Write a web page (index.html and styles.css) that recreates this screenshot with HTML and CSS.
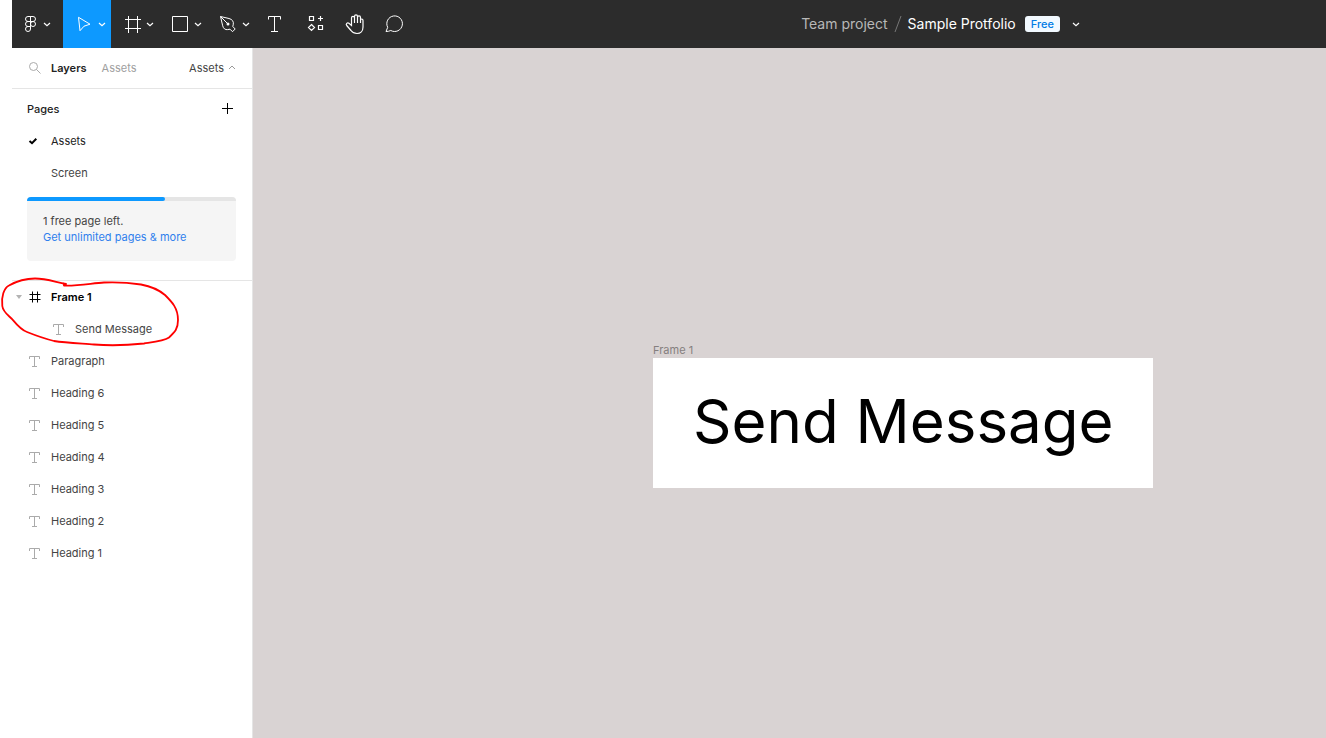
FILE: index.html
```html
<!DOCTYPE html>
<html lang="en">
<head>
<meta charset="utf-8">
<title>Sample Protfolio</title>
<link rel="stylesheet" href="styles.css">
</head>
<body>
<svg class="defs" aria-hidden="true">
  <symbol id="text-icon" viewBox="0 0 16 16"><path d="M2.500 6v-2.500h10v2.500M7.500 3.500v10M5 13.500h5"/></symbol>
  <symbol id="frame-icon" viewBox="0 0 16 16"><path d="M5.500 2.500v11M10.500 2.500v11M2.500 5.500h11M2.500 10.500h11"/></symbol>
</svg>
<div class="app">
  <header class="toolbar">
    <nav class="tools" aria-label="Tools">
      <button class="tool tool-menu" aria-label="Main menu">
        <svg width="51" height="48" viewBox="0 0 51 48"><path d="M18.500 16.500h-2.500a2.500 2.500 0 0 0 0 5h2.500zM18.500 16.500h2.500a2.500 2.500 0 0 1 0 5h-2.500zM18.500 21.500h-2.500a2.500 2.500 0 0 0 0 5h2.500zM18.500 26.500h-2.500a2.500 2.500 0 1 0 2.500 2.500z"/><circle cx="21" cy="24" r="2.500"/><path class="chev" d="M32 23l3 2.700 3-2.700"/></svg>
      </button>
      <button class="tool tool-active" aria-label="Move">
        <svg width="48" height="48" viewBox="0 0 48 48"><path d="M15.500 17.300l11.500 6.900-6 2-4 4.500z"/><path class="chev" d="M36 23l3 2.700 3-2.700"/></svg>
      </button>
      <button class="tool" aria-label="Frame">
        <svg width="48" height="48" viewBox="0 0 48 48"><path d="M17.500 16v17M26.500 16v17M14 19.500h16M14 28.500h16"/><path class="chev" d="M36 23l3 2.700 3-2.700"/></svg>
      </button>
      <button class="tool" aria-label="Rectangle">
        <svg width="48" height="48" viewBox="0 0 48 48"><path d="M13.500 16.500h15v15h-15z"/><path class="chev" d="M36 23l3 2.700 3-2.700"/></svg>
      </button>
      <button class="tool" aria-label="Pen">
        <svg width="48" height="48" viewBox="0 0 48 48"><path d="M13.500 16.500l8.500 2c3.200.8 4.800 3 4.300 5.700l-.5 2.300 2.400 2.500-2.700 2.700-2.500-2.500-2.300.4c-2.500.4-4.300-1-5-3.800zM13.500 16.500l6.500 6.500"/><circle class="dot" cx="21" cy="24" r="1.500"/><path class="chev" d="M36 23l3 2.700 3-2.700"/></svg>
      </button>
      <button class="tool tool-small" aria-label="Text">
        <svg width="40" height="48" viewBox="0 0 40 48"><path d="M13.500 19.500v-3h12v3M19.500 16.500v15M16 31.500h7"/></svg>
      </button>
      <button class="tool tool-small" aria-label="Resources">
        <svg width="40" height="48" viewBox="0 0 40 48"><path class="bold" d="M14.500 16.500h4v4h-4zM23.500 25.500h4v4h-4zM25.500 16v5M23 18.500h5M16.500 24.500l3 3-3 3-3-3z"/></svg>
      </button>
      <button class="tool tool-small" aria-label="Hand">
        <svg width="40" height="48" viewBox="0 0 40 48"><path class="bold" d="M16.500 23v-5c0-2.300 3-2.300 3 0v-1.500c0-2.300 3-2.300 3 0v1c0-2.200 3-2.200 3 0v3c0-2 2.500-2 2.500 0v6.500c0 4-2.500 6.500-6 6.500-2.800 0-4.500-1-6-3l-4.300-5c-1.300-1.700.7-3.300 2.200-2.200l2.600 2.200zM19.500 18v5M22.500 17v6M25.500 18v5"/></svg>
      </button>
      <button class="tool tool-small" aria-label="Comment">
        <svg width="40" height="48" viewBox="0 0 40 48"><path d="M11 31.500l1.700-4.200a7.800 7.800 0 1 1 3.100 3.200c-1.500.7-3 1-4.800 1z"/></svg>
      </button>
    </nav>
    <div class="document">
      <a class="project" href="#">Team project</a>
      <svg class="slash" width="8" height="16" viewBox="0 0 8 16"><path d="M7 0L1 16"/></svg>
      <span class="file-name">Sample Protfolio</span>
      <span class="badge">Free</span>
      <button class="file-menu" aria-label="File menu"><svg width="8" height="8" viewBox="0 0 8 8"><path class="chev" d="M1 3l3 2.700 3-2.700"/></svg></button>
    </div>
  </header>

  <div class="workspace">
    <aside class="sidebar">
      <div class="tabs">
        <button class="search" aria-label="Search"><svg width="16" height="16" viewBox="0 0 16 16"><circle cx="6.500" cy="6.500" r="4"/><path d="M9.500 9.500l4 4"/></svg></button>
        <button class="tab tab-current">Layers</button>
        <button class="tab">Assets</button>
        <button class="page-toggle">Assets <svg width="8" height="8" viewBox="0 0 8 8"><path d="M1 5l3-3 3 3"/></svg></button>
      </div>

      <section class="pages">
        <div class="pages-head">
          <h2>Pages</h2>
          <button class="add" aria-label="Add page"><svg width="16" height="16" viewBox="0 0 16 16"><path d="M7.500 2v11M2 7.500h11"/></svg></button>
        </div>
        <button class="row row-selected"><span class="caret"></span><svg class="icon check" viewBox="0 0 16 16"><path d="M2.500 8l2.500 2.200 4.300-4.400"/></svg>Assets</button>
        <button class="row"><span class="caret"></span><span class="icon"></span>Screen</button>
        <div class="quota">
          <div class="track"><div class="used"></div></div>
          <p>1 free page left.</p>
          <a href="#">Get unlimited pages &amp; more</a>
        </div>
      </section>

      <section class="layers" aria-label="Layers">
        <button class="row row-frame"><span class="caret"><svg width="6" height="4" viewBox="0 0 6 4"><path d="M0 0h6l-3 4z"/></svg></span><svg class="icon"><use href="#frame-icon"/></svg>Frame 1</button>
        <button class="row row-child"><span class="caret"></span><svg class="icon"><use href="#text-icon"/></svg>Send Message</button>
        <button class="row"><span class="caret"></span><svg class="icon"><use href="#text-icon"/></svg>Paragraph</button>
        <button class="row"><span class="caret"></span><svg class="icon"><use href="#text-icon"/></svg>Heading 6</button>
        <button class="row"><span class="caret"></span><svg class="icon"><use href="#text-icon"/></svg>Heading 5</button>
        <button class="row"><span class="caret"></span><svg class="icon"><use href="#text-icon"/></svg>Heading 4</button>
        <button class="row"><span class="caret"></span><svg class="icon"><use href="#text-icon"/></svg>Heading 3</button>
        <button class="row"><span class="caret"></span><svg class="icon"><use href="#text-icon"/></svg>Heading 2</button>
        <button class="row"><span class="caret"></span><svg class="icon"><use href="#text-icon"/></svg>Heading 1</button>
      </section>
    </aside>

    <main class="canvas">
      <div class="artboard">
        <div class="artboard-label">Frame 1</div>
        <div class="artboard-body">Send Message</div>
      </div>
    </main>
  </div>
</div>

<svg class="annotation" width="184" height="72" viewBox="0 276 184 72" aria-hidden="true"><path d="M66 284C52 281 45 278.500 35 278.500C25 278.500 17 281 9 285.500C4 288 1 297 2.300 306C3 312 8 315 12 319C17 325 21 330 27 332C37 336 46 339 54 341C66 343 82 343.500 94 344.500C112 346 130 345 144 343.500C154 342 164 341 169 337.500C175 332 178 329 178 320C178 308 172 302 165 295C158 289 149 286 141 284.500C128 282.500 116 282 104 282.500C93 283 79 286 64 285.500L63.500 283.500"/></svg>
</body>
</html>
```

FILE: styles.css
```css
* {
  box-sizing: border-box;
}

body {
  margin: 0;
  background: #fff;
  color: #444;
  font-family: Inter, "Liberation Sans", sans-serif;
  font-size: 11px;
  line-height: 16px;
}

button {
  margin: 0;
  padding: 0;
  border: 0;
  background: none;
  color: inherit;
  font: inherit;
  cursor: pointer;
}

a {
  text-decoration: none;
}

svg {
  display: block;
  flex: none;
  fill: none;
  stroke: currentColor;
}

.defs {
  position: absolute;
  width: 0;
  height: 0;
}

.app {
  display: flex;
  flex-direction: column;
  min-height: 100vh;
  padding-left: 12px;
}

/* Toolbar */
.toolbar {
  display: flex;
  height: 48px;
  background: #2c2c2c;
  color: #fff;
}

.tools {
  display: flex;
}

.tool {
  width: 48px;
}

.tool-menu {
  width: 51px;
}

.tool-small {
  width: 40px;
}

.tool-active {
  background: #0d99ff;
}

.chev,
.bold {
  stroke-width: 1.2;
}

.dot {
  fill: currentColor;
  stroke: none;
}

.document {
  display: flex;
  flex: 1;
  align-items: center;
  justify-content: center;
  padding-left: 140px;
  font-size: 14px;
  white-space: nowrap;
}

.project {
  color: #b8b8b8;
}

.slash {
  margin: 0 6px;
  color: #777;
}

.badge {
  margin: 0 12px 0 9px;
  padding: 0 6px;
  border-radius: 3px;
  background: #f2f9ff;
  color: #007be5;
  font-size: 11px;
  font-weight: 500;
}

/* Sidebar */
.workspace {
  display: flex;
  flex: 1;
}

.sidebar {
  width: 241px;
  flex: none;
  border-right: 1px solid #e5e5e5;
}

.tabs {
  display: flex;
  align-items: center;
  height: 41px;
  padding: 0 16px 0 15px;
  border-bottom: 1px solid #e5e5e5;
}

.search {
  margin-right: 8px;
  color: #aaa;
}

.tab {
  margin-right: 15px;
  color: #a0a0a0;
}

.tab-current {
  color: #222;
  font-weight: 600;
}

.page-toggle {
  display: flex;
  align-items: center;
  gap: 4px;
  margin-left: auto;
}

.page-toggle svg {
  color: #999;
}

.pages {
  padding: 4px 0 19px;
  border-bottom: 1px solid #e5e5e5;
}

.pages-head {
  display: flex;
  align-items: center;
  justify-content: space-between;
  height: 32px;
  padding: 0 16px 0 15px;
}

.pages-head h2 {
  margin: 0;
  color: #222;
  font-size: 11px;
  font-weight: 500;
}

.add {
  color: #000;
}

.row {
  display: flex;
  align-items: center;
  width: 100%;
  height: 32px;
  text-align: left;
}

.caret {
  display: flex;
  justify-content: center;
  width: 15px;
  padding-right: 2px;
}

.caret svg {
  fill: #b3b3b3;
  stroke: none;
}

.icon {
  width: 16px;
  height: 16px;
  margin-right: 8px;
  color: #aaa;
}

.check {
  color: #000;
  stroke-width: 2;
}

.row-selected {
  color: #222;
}

.row-frame {
  color: #000;
  font-weight: 600;
}

.row-frame .icon {
  color: #000;
}

.row-child {
  padding-left: 24px;
}

.quota {
  margin: 8px 16px 0 15px;
  padding-bottom: 16px;
  border-radius: 4px;
  background: #f5f5f5;
  overflow: hidden;
}

.track {
  height: 4px;
  margin-bottom: 12px;
  background: #e5e5e5;
}

.used {
  width: 66%;
  height: 4px;
  border-radius: 0 2px 2px 0;
  background: #0d99ff;
}

.quota p {
  margin: 0;
  padding: 0 16px;
}

.quota a {
  display: block;
  padding: 0 16px;
  color: #2f80ed;
}

/* Canvas */
.canvas {
  position: relative;
  flex: 1;
  background: #d9d3d3;
  overflow: hidden;
}

.artboard {
  position: absolute;
  top: 294px;
  left: 400px;
}

.artboard-label {
  color: #857f7f;
}

.artboard-body {
  padding: 23px 39px 27px 40px;
  background: #fff;
  color: #000;
  font-size: 60px;
  line-height: 80px;
  white-space: nowrap;
}

.annotation {
  position: absolute;
  top: 276px;
  left: 0;
  color: #f00;
  stroke-width: 1.8;
  stroke-linecap: round;
  stroke-linejoin: round;
  pointer-events: none;
}
```
